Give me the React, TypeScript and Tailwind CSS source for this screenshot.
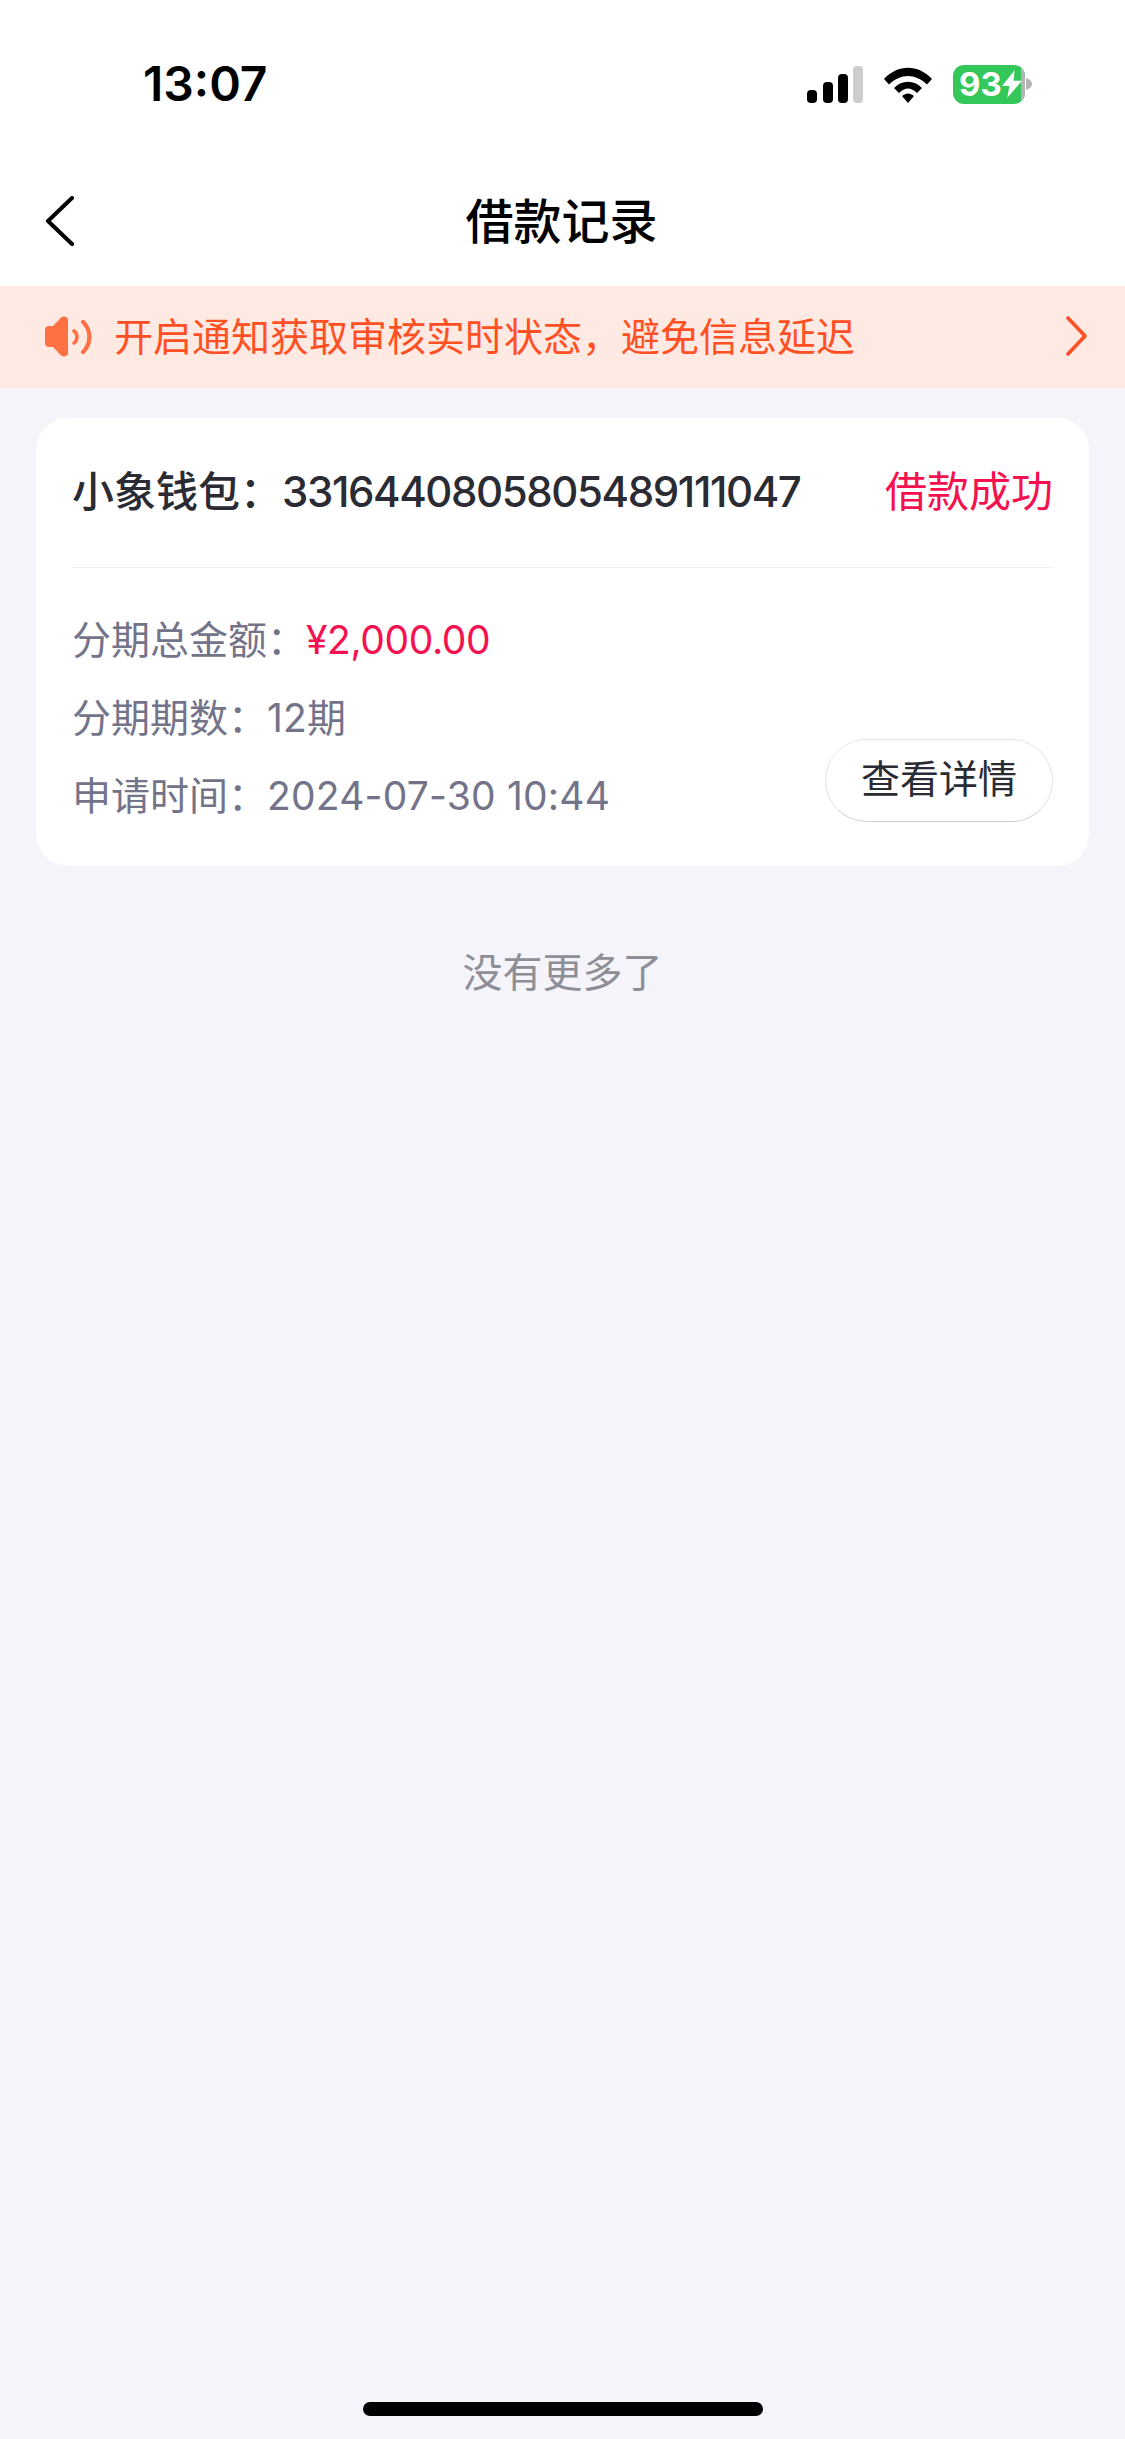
const FONT = "font-['Inter','Noto_Sans_CJK_SC',sans-serif]";

const StatusIcons = () => (
  <div className="flex items-center">
    <svg width="56" height="37" viewBox="0 0 56 37" className="block">
      <rect x="0" y="24" width="10" height="13" rx="4" fill="#000" />
      <rect x="16" y="16" width="10" height="21" rx="4" fill="#000" />
      <rect x="31" y="8" width="10" height="29" rx="4" fill="#000" />
      <rect x="46" y="0" width="10" height="37" rx="4" fill="#cdcdcd" />
    </svg>
    <svg width="48" height="36" viewBox="0 0 48 36" className="mt-[1px] ml-[21px] block">
      <path d="M0 12 C14 -3 34 -3 48 12 L43 17.5 C31 6 17 6 5 17.5 Z" fill="#000" />
      <path d="M10 21 C18 12.5 30 12.5 38 21 L33 26 C27 20 21 20 15 26 Z" fill="#000" />
      <path d="M18 29 C22 25.5 26 25.5 30 29 L24 36 Z" fill="#000" />
    </svg>
    <div className="relative ml-[21px] flex h-[39px] w-[72px] items-center overflow-hidden rounded-[11px] bg-[#34c759] pl-[6px]">
      <span className="text-[33px] leading-none font-bold text-white">93</span>
      <svg width="20" height="28" viewBox="0 0 19 26" className="z-10 block">
        <path d="M12 0 L0 15 H7 L5 26 L19 10 H11 Z" fill="#fff" />
      </svg>
      <div className="absolute top-0 right-0 h-full w-[4px] bg-[#b5b5b5]" />
    </div>
    <svg width="6" height="14" viewBox="0 0 6 14" className="ml-[1px] block">
      <path d="M0 1 C3 2 6 4 6 7 C6 10 3 12 0 13 Z" fill="#b5b5b5" />
    </svg>
  </div>
);

const SpeakerIcon = () => (
  <svg width="47" height="41" viewBox="0 0 47 41" className="block shrink-0">
    <path
      d="M16 1.5 C19 -0.5 23 0.5 23 4 V37 C23 40.5 19 41.5 16 39.5 L8 31 H4 C1.5 31 0 29.5 0 27 V14 C0 11.5 1.5 10 4 10 H8 Z"
      fill="#ff7043"
    />
    <path d="M29 15 C33 18 33 24 29 27" stroke="#ff7043" strokeWidth="3.6" strokeLinecap="round" fill="none" />
    <path d="M38 6 C46.5 14 46.5 28 38 36" stroke="#ff7043" strokeWidth="4.2" strokeLinecap="round" fill="none" />
  </svg>
);

const InfoRow = ({ label, value, highlight }: { label: string; value: string; highlight?: boolean }) => (
  <div className="flex h-[78px] items-center text-[39px] text-[#73738a]">
    <span>{label}</span>
    <span className={highlight ? "tracking-[-0.4px] text-[#f5104f]" : "tracking-[0.2px]"}>{value}</span>
  </div>
);

export default function App() {
  return (
    <div className={`flex h-[2439px] w-[1125px] flex-col overflow-hidden bg-[#f4f4fa] ${FONT}`}>
      <div className="bg-white">
        <div className="flex h-[166px] items-center justify-between pt-[2px] pr-[93px] pl-[143px]">
          <span className="text-[48px] leading-none font-semibold text-black">13:07</span>
          <StatusIcons />
        </div>
        <div className="relative flex h-[120px] items-center justify-center pr-[2px] pb-[8px]">
          <svg width="30" height="50" viewBox="0 0 30 50" className="absolute top-[30px] left-[45px] block" fill="none">
            <path d="M27 2 L3 25 L27 48" stroke="#000" strokeWidth="4" strokeLinecap="round" strokeLinejoin="round" />
          </svg>
          <h1 className="text-[48px] leading-none font-medium text-black">借款记录</h1>
        </div>
      </div>

      <div className="flex h-[102px] items-center bg-[#ffe9e3] pr-[37px] pb-[2px] pl-[45px]">
        <SpeakerIcon />
        <span className="ml-[22px] text-[39px] leading-none text-[#ff5024]">开启通知获取审核实时状态，避免信息延迟</span>
        <svg width="22" height="40" viewBox="0 0 22 40" className="ml-auto block" fill="none">
          <path d="M2 2 L19 20 L2 38" stroke="#ff5024" strokeWidth="3.6" strokeLinecap="round" strokeLinejoin="round" />
        </svg>
      </div>

      <div className="mx-[36px] mt-[30px] h-[448px] rounded-[32px] bg-white px-[36px]">
        <div className="flex h-[150px] items-center justify-between border-b border-[#f1f1f5] pb-[2px] text-[42px]">
          <span className="font-medium text-[#2a2b33]">
            小象钱包：<span className="tracking-[-1.4px]">3316440805805489111047</span>
          </span>
          <span className="text-[#f5104f]">借款成功</span>
        </div>
        <div className="relative pt-[33px]">
          <InfoRow label="分期总金额：" value="¥2,000.00" highlight />
          <InfoRow label="分期期数：" value="12期" />
          <InfoRow label="申请时间：" value="2024-07-30 10:44" />
          <button className="absolute top-[171px] right-0 flex h-[83px] w-[228px] items-center justify-center rounded-full border border-[#e4e4ee] border-b-[#cfcfde] bg-white pb-[2px] text-[39px] text-[#2a2b33]">
            查看详情
          </button>
        </div>
      </div>

      <p className="mt-[87px] text-center text-[40px] leading-none text-[#8e8e97]">没有更多了</p>

      <div className="mt-auto mb-[23px] flex justify-center">
        <div className="h-[14px] w-[400px] rounded-full bg-black" />
      </div>
    </div>
  );
}
